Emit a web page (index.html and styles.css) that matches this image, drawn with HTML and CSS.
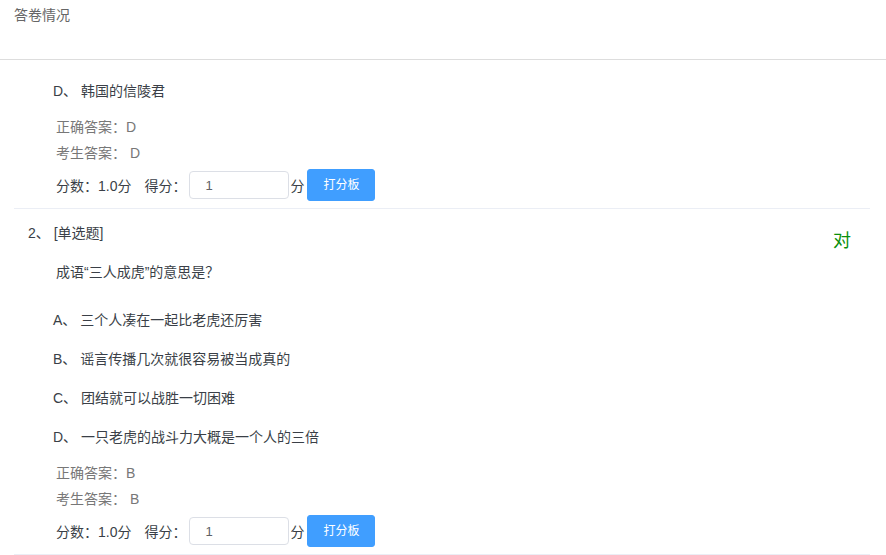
FILE: index.html
```html
<!DOCTYPE html>
<html lang="zh-CN">
<head>
    <meta charset="UTF-8">
    <meta name="viewport" content="width=device-width, initial-scale=1.0">
    <title>答卷情况</title>
    <link rel="stylesheet" href="styles.css">
</head>
<body>
    <div class="header">答卷情况</div>

    <div class="paper">
        <div class="item first">
            <div class="options">
                <div class="option">D、 韩国的信陵君</div>
            </div>
            <div class="answer">正确答案：D</div>
            <div class="answer">考生答案： D</div>
            <div class="score-row">
                <span>分数：1.0分</span>
                <span class="got">得分：</span>
                <input type="text" class="score-input" value="1">
                <span class="unit">分</span>
                <button class="btn">打分板</button>
            </div>
        </div>

        <div class="item">
            <div class="title">
                <span class="judge">对</span>
                2、 [单选题]
            </div>
            <div class="question">成语“三人成虎”的意思是？</div>
            <div class="options">
                <div class="option">A、 三个人凑在一起比老虎还厉害</div>
                <div class="option">B、 谣言传播几次就很容易被当成真的</div>
                <div class="option">C、 团结就可以战胜一切困难</div>
                <div class="option">D、 一只老虎的战斗力大概是一个人的三倍</div>
            </div>
            <div class="answer">正确答案：B</div>
            <div class="answer">考生答案： B</div>
            <div class="score-row">
                <span>分数：1.0分</span>
                <span class="got">得分：</span>
                <input type="text" class="score-input" value="1">
                <span class="unit">分</span>
                <button class="btn">打分板</button>
            </div>
        </div>
    </div>
</body>
</html>
```

FILE: styles.css
```css
body {
    margin: 0;
    font-family: "Liberation Sans", "Noto Sans CJK SC", sans-serif;
    font-size: 14px;
    color: #3a3f47;
    background: #fff;
}
.header {
    height: 60px;
    padding: 2px 14px 0;
    box-sizing: border-box;
    line-height: 26px;
    color: #666;
    border-bottom: 1px solid #ddd;
}
.paper {
    padding: 0 16px 0 14px;
}
.item {
    padding-bottom: 7px;
    border-bottom: 1px solid #ebeef5;
}
.item.first {
    padding-top: 12px;
}
.title {
    margin-top: 11px;
    padding-left: 14px;
    line-height: 26px;
}
.judge {
    float: right;
    margin: 8px 19px 0 0;
    font-size: 18px;
    line-height: 26px;
    color: #0a8f0a;
}
.question {
    margin-top: 13px;
    padding-left: 42px;
    line-height: 26px;
}
.title + .question + .options {
    margin-top: 16px;
}
.option {
    padding-left: 39px;
    line-height: 39px;
}
.answer {
    padding-left: 42px;
    line-height: 26px;
    color: #777;
}
.options + .answer {
    margin-top: 3px;
}
.score-row {
    display: flex;
    align-items: center;
    height: 32px;
    margin-top: 3px;
    padding-left: 42px;
}
.got {
    margin-left: 13px;
}
.score-input {
    width: 100px;
    height: 28px;
    box-sizing: border-box;
    margin-left: 3px;
    padding: 0 15px;
    border: 1px solid #dcdfe6;
    border-radius: 4px;
    font-family: inherit;
    font-size: 13px;
    color: #606266;
    outline: none;
}
.unit {
    margin-left: 1px;
}
.btn {
    margin-left: 3px;
    padding: 9px 15px;
    font-family: inherit;
    font-size: 12px;
    line-height: 12px;
    color: #fff;
    background-color: #409eff;
    border: 1px solid #409eff;
    border-radius: 3px;
    cursor: pointer;
}
```
